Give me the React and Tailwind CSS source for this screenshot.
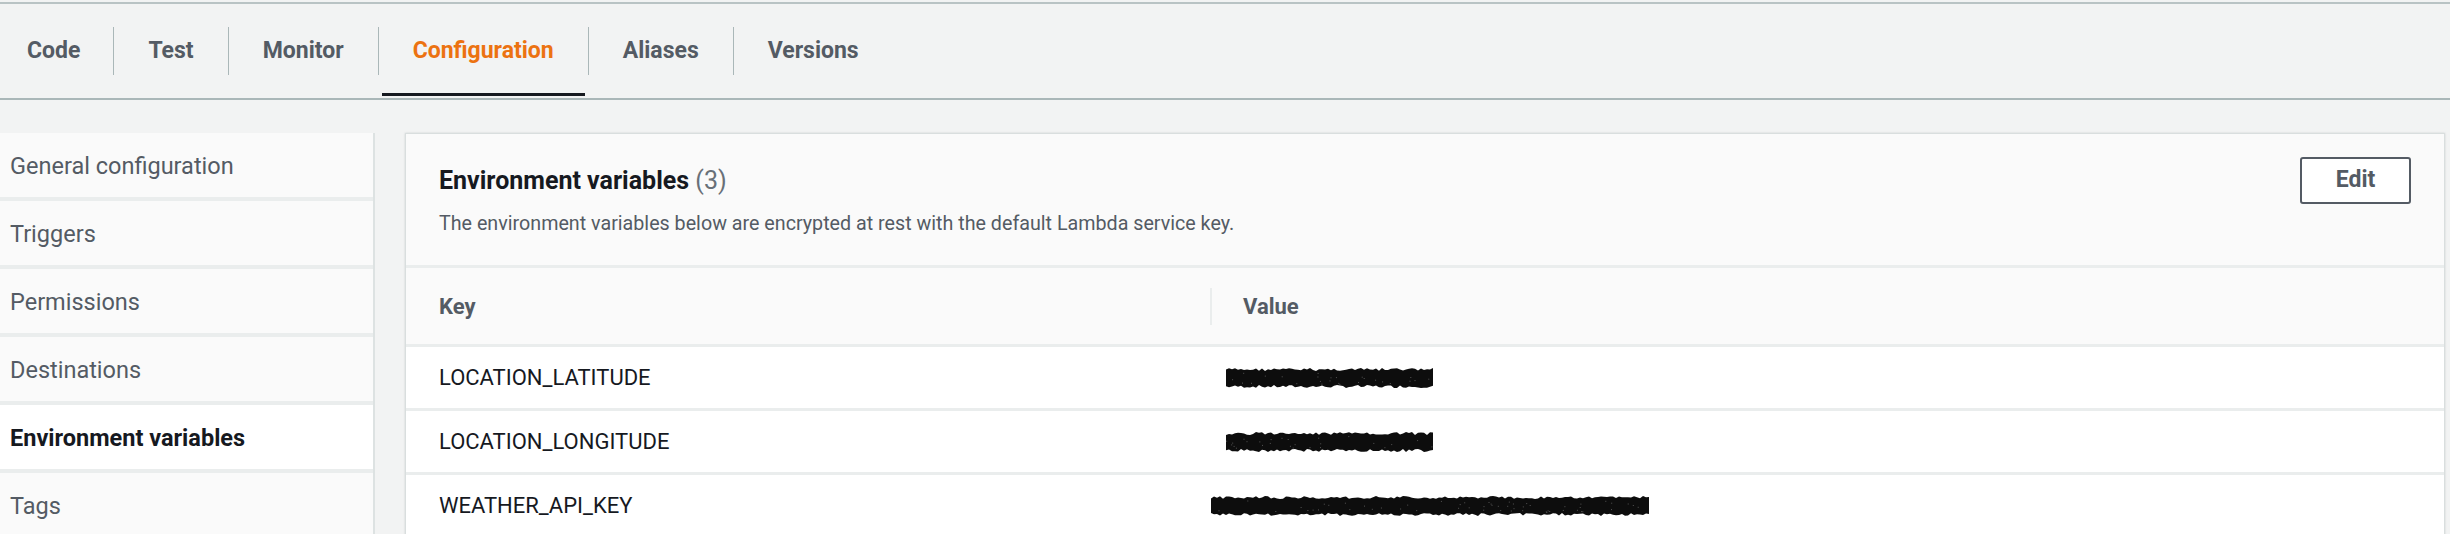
import React from "react";

const TABS = ["Code", "Test", "Monitor", "Configuration", "Aliases", "Versions"];
const ACTIVE_TAB = "Configuration";

const SECTIONS = [
  "General configuration",
  "Triggers",
  "Permissions",
  "Destinations",
  "Environment variables",
  "Tags",
];
const ACTIVE_SECTION = "Environment variables";

const VARIABLES = [
  { key: "LOCATION_LATITUDE", width: 208, seed: 7, pad: "pl-[16px]" },
  { key: "LOCATION_LONGITUDE", width: 208, seed: 19, pad: "pl-[16px]" },
  { key: "WEATHER_API_KEY", width: 440, seed: 41, pad: "pl-[1px]" },
];

// small seeded random so the scribble looks the same every render
function rng(seed) {
  let s = seed;
  return () => {
    s = (s * 9301 + 49297) % 233280;
    return s / 233280;
  };
}

function Scribble({ width, seed }) {
  const rand = rng(seed);
  const h = 22;
  const top = [];
  const bottom = [];
  for (let x = 0; x <= width; x += 3) {
    top.push(`${x},${(1 + rand() * 3).toFixed(1)}`);
    bottom.push(`${x},${(h - 1 - rand() * 3).toFixed(1)}`);
  }
  const d = `M${top.join(" L")} L${bottom.reverse().join(" L")} Z`;
  const specks = [];
  for (let i = 0; i < width / 8; i++) {
    specks.push(
      <rect
        key={i}
        x={(rand() * width).toFixed(1)}
        y={(5 + rand() * 12).toFixed(1)}
        width="1"
        height="1"
        fill="#555"
      />
    );
  }
  return (
    <svg width={width} height={h} viewBox={`0 0 ${width} ${h}`}>
      <path d={d} fill="#0d0d0d" />
      {specks}
    </svg>
  );
}

export default function App() {
  return (
    <div className="w-[2450px] h-[534px] overflow-hidden bg-[#f2f3f3] font-['Roboto','Liberation_Sans',sans-serif] text-[#16191f]">
      {/* Top strip */}
      <div className="mt-[2px] h-[2px] bg-[#b9c3c4]" />

      {/* Tabs */}
      <div className="flex items-stretch h-[96px] border-b-2 border-[#aab7b8]">
        {TABS.map((tab, i) => {
          const active = tab === ACTIVE_TAB;
          return (
            <React.Fragment key={tab}>
              {i > 0 && <div className="self-center w-px h-[48px] bg-[#aab7b8]" />}
              <div className={`flex flex-col ${i === 0 ? "pl-[27px] pr-[33px]" : "px-[34px]"}`}>
                <div
                  className={`flex-1 flex items-center pt-[6px] text-[23px] font-bold ${
                    active ? "text-[#ec7211]" : "text-[#545b64]"
                  }`}
                >
                  {tab}
                </div>
                <div className={`h-[3px] mb-[2px] -mx-[31px] ${active ? "bg-[#16191f]" : ""}`} />
              </div>
            </React.Fragment>
          );
        })}
      </div>

      <div className="flex pt-[33px]">
        {/* Sidebar */}
        <div className="w-[375px] shrink-0 flex flex-col gap-[4px] bg-[#eaeded] border-r-2 border-[#dde2e2]">
          {SECTIONS.map((s) => {
            const active = s === ACTIVE_SECTION;
            return (
              <div
                key={s}
                className={`h-[64px] shrink-0 flex items-center px-[10px] pt-[3px] text-[23.5px] ${
                  active ? "bg-white font-bold text-[#16191f]" : "bg-[#fafafa] text-[#545b64]"
                }`}
              >
                {s}
              </div>
            );
          })}
        </div>

        {/* Card */}
        <div className="flex-1 ml-[30px] mr-[5px] bg-[#fafafa] border-x border-t border-[#d9dede] shadow-[0_0_2px_rgba(0,28,36,0.15)]">
          {/* Header */}
          <div className="h-[134px] px-[33px] flex justify-between border-b-[3px] border-[#eaeded]">
            <div className="pt-[30px]">
              <h2 className="text-[25px] leading-[34px] font-bold text-[#16191f]">
                Environment variables <span className="font-normal text-[#687078]">(3)</span>
              </h2>
              <p className="mt-[13px] text-[19.7px] leading-[26px] text-[#545b64]">
                The environment variables below are encrypted at rest with the default Lambda service key.
              </p>
            </div>
            <div className="pt-[23px]">
              <button className="w-[111px] h-[47px] border-2 border-[#545b64] rounded-[3px] bg-white text-[23px] font-bold text-[#545b64]">
                Edit
              </button>
            </div>
          </div>

          {/* Table head */}
          <div className="h-[79px] flex items-center border-b-[3px] border-[#eaeded] text-[22px] font-bold text-[#545b64]">
            <div className="w-[804px] pl-[33px]">Key</div>
            <div className="w-[2px] h-[37px] bg-[#eaeded]" />
            <div className="pl-[31px]">Value</div>
          </div>

          {/* Rows */}
          {VARIABLES.map((v) => (
            <div
              key={v.key}
              className="h-[64px] flex items-center bg-white border-b-[3px] border-[#eaeded] text-[22px] text-[#16191f]"
            >
              <div className="w-[804px] pl-[33px]">{v.key}</div>
              <div className={`${v.pad} flex items-center`}>
                <Scribble width={v.width} seed={v.seed} />
              </div>
            </div>
          ))}
        </div>
      </div>
    </div>
  );
}
